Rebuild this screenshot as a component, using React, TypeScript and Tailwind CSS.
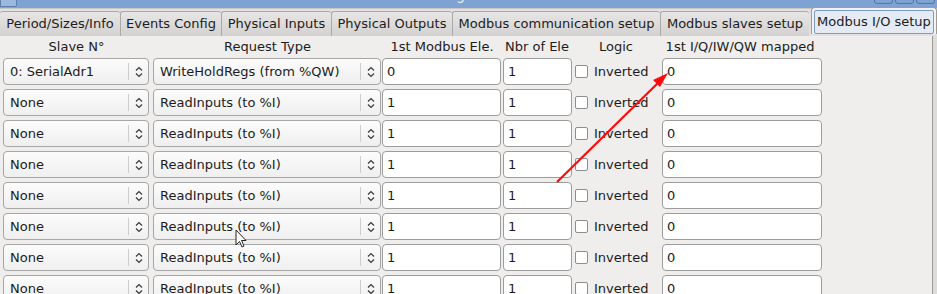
import React from 'react';

const tabs = [
    { label: 'Period/Sizes/Info', w: 120 },
    { label: 'Events Config', w: 101 },
    { label: 'Physical Inputs', w: 110 },
    { label: 'Physical Outputs', w: 121 },
    { label: 'Modbus communication setup', w: 208 },
    { label: 'Modbus slaves setup', w: 149 },
];

const rows = [
    { slave: '0: SerialAdr1', req: 'WriteHoldRegs (from %QW)', first: '0', nbr: '1', mapped: '0' },
    ...Array.from({ length: 7 }, () => ({ slave: 'None', req: 'ReadInputs (to %I)', first: '1', nbr: '1', mapped: '0' })),
];

function UpDown() {
    return (
        <svg width="8" height="12" viewBox="0 0 8 12" className="shrink-0">
            <path d="M1 4.5 L4 1.5 L7 4.5 M1 7.5 L4 10.5 L7 7.5" fill="none" stroke="#3a3a3a" strokeWidth="1.2" />
        </svg>
    );
}

function Combo({ text, w }: { text: string; w: string }) {
    return (
        <div className={`${w} h-[27px] shrink-0 flex items-center rounded-[4px] border border-[#a6a6a6] bg-gradient-to-b from-[#fcfcfc] to-[#efefef]`}>
            <span className="flex-1 pl-[6px] truncate">{text}</span>
            <div className="h-[17px] w-px bg-[#cdcdcd]" />
            <div className="w-[19px] flex justify-center">
                <UpDown />
            </div>
        </div>
    );
}

function Field({ value, w }: { value: string; w: string }) {
    return (
        <div className={`${w} h-[27px] shrink-0 flex items-center rounded-[4px] border border-[#9c9c9c] bg-white pl-[4px]`}>
            {value}
        </div>
    );
}

export default function App() {
    return (
        <div className="w-[937px] h-[294px] overflow-hidden bg-[#dedcda] text-[13px] text-[#1c1c1c] relative" style={{ fontFamily: '"DejaVu Sans", sans-serif' }}>
            {/* title bar */}
            <div className="h-[8px] bg-[#7ea3d3] relative overflow-hidden">
                <div className="absolute left-0 top-[-1px] w-[17px] h-[8px] border border-[#5f80ae] bg-[#9cb8de] rounded-br-[2px]" />
                <div className="absolute left-[420px] top-[-14px] text-[#e8eef8] text-[14px] leading-[18px]">Config</div>
                <div className="absolute right-[2px] top-[-6px] flex gap-[2px]">
                    <div className="w-[19px] h-[10px] rounded-[3px] border border-[#55749f]" />
                    <div className="w-[19px] h-[10px] rounded-[3px] border border-[#55749f]" />
                    <div className="w-[19px] h-[10px] rounded-[3px] border border-[#55749f]" />
                </div>
            </div>

            {/* tabs */}
            <div className="flex items-end h-[28px] bg-[#e3e1df] border-t border-[#c8c8c8]">
                {tabs.map((t) => (
                    <div
                        key={t.label}
                        style={{ width: t.w }}
                        className="h-[26px] shrink-0 flex items-center justify-center border border-[#a9a9a9] border-r-0 first:border-l-0 rounded-t-[3px] bg-gradient-to-b from-[#e7e6e5] to-[#d3d2d0] mb-[-1px] whitespace-nowrap"
                    >
                        {t.label}
                    </div>
                ))}
                <div className="ml-[2px] w-[126px] h-[27px] shrink-0 self-start mt-[-2px] border border-[#9b9b9b] border-b-0 rounded-t-[4px] bg-[#f3f2f1] p-[2px] pb-0">
                    <div className="h-full flex items-center justify-center rounded-[2px] border border-[#7c9cc8] bg-[#e4ebf5] whitespace-nowrap">
                        Modbus I/O setup
                    </div>
                </div>
            </div>

            {/* page */}
            <div className="w-[933px] h-[260px] bg-[#efeeed] border-r border-[#9b9b9b] relative">
                <div className="flex h-[21px] items-center pt-[1px] whitespace-nowrap">
                    <div className="w-[153px] text-center">Slave N°</div>
                    <div className="w-[229px] text-center">Request Type</div>
                    <div className="w-[120px] text-center">1st Modbus Ele.</div>
                    <div className="w-[70px] text-center">Nbr of Ele</div>
                    <div className="w-[88px] text-center">Logic</div>
                    <div className="w-[160px] text-center">1st I/Q/IW/QW mapped</div>
                </div>
                <div className="flex flex-col gap-[4px] pl-[3px] pt-[1px]">
                    {rows.map((r, i) => (
                        <div key={i} className="flex items-center">
                            <Combo text={r.slave} w="w-[146px]" />
                            <div className="w-[4px]" />
                            <Combo text={r.req} w="w-[228px]" />
                            <div className="w-[1px]" />
                            <Field value={r.first} w="w-[119px]" />
                            <div className="w-[2px]" />
                            <Field value={r.nbr} w="w-[69px]" />
                            <div className="ml-[3px] w-[13px] h-[13px] border border-[#8d8d8d] bg-white rounded-[2px]" />
                            <span className="ml-[6px] w-[68px]">Inverted</span>
                            <Field value={r.mapped} w="w-[160px]" />
                        </div>
                    ))}
                </div>

                {/* annotation arrow */}
                <svg className="absolute left-0 top-0 pointer-events-none" width="933" height="260" viewBox="0 36 933 260">
                    <line x1="557" y1="182" x2="660" y2="81" stroke="#ff0a0a" strokeWidth="2.2" />
                    <polygon points="668,73 653,80 660,87" fill="#ff0a0a" />
                </svg>

                {/* mouse cursor */}
                <svg className="absolute left-[235px] top-[193px]" width="13" height="20" viewBox="0 0 13 20">
                    <path d="M1 1 L1 16 L4.5 12.5 L7 18 L9 17 L6.5 11.5 L11 11.5 Z" fill="#fff" stroke="#222" strokeWidth="1" strokeLinejoin="round" />
                </svg>
            </div>
        </div>
    );
}
